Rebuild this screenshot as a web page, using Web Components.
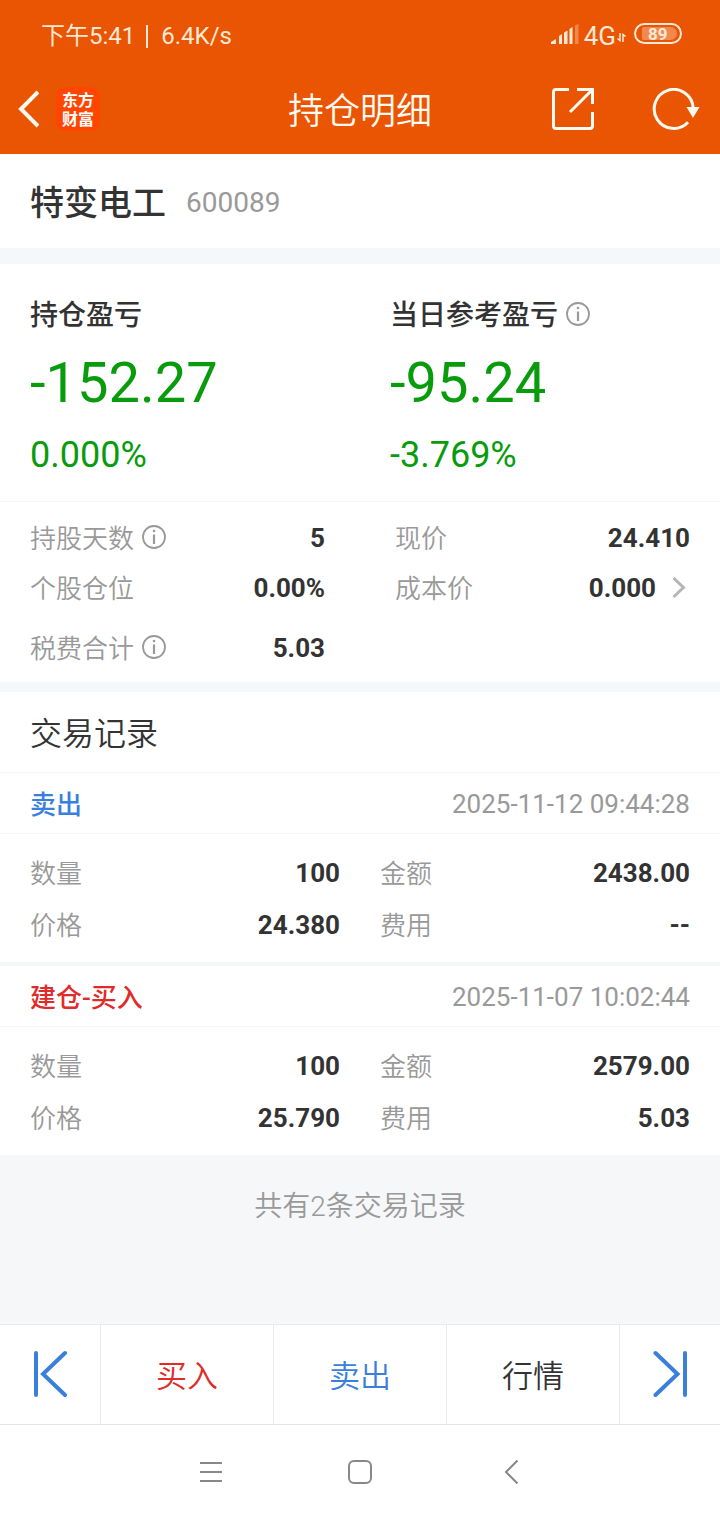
<!DOCTYPE html>
<html lang="zh-CN">
<head>
<meta charset="utf-8">
<meta name="viewport" content="width=device-width, initial-scale=1">
<title>持仓明细</title>
<style>
  html, body { margin: 0; padding: 0; }
  body {
    font-family: Roboto, "Noto Sans CJK SC", sans-serif;
    color: #333;
    background: #fff;
    --brand: #e95502;
    --band: #f6f7f9;
    --line: #f5f5f5;
    --muted: #999;
    --blue: #3a7fdb;
    --red: #e02b2b;
    --green: #089c0c;
  }
</style>
</head>
<body>
<position-page></position-page>

<script>
const define = (name, html, setup) => {
  const tpl = document.createElement('template');
  tpl.innerHTML = html;
  customElements.define(name, class extends HTMLElement {
    constructor() {
      super();
      this.attachShadow({ mode: 'open' }).append(tpl.content.cloneNode(true));
    }
    connectedCallback() { if (setup) setup(this, this.shadowRoot); }
  });
};

define('status-bar', `
  <style>
    :host { display: flex; align-items: center; justify-content: space-between; height: 56px;
      padding: 8px 38px 0 41px; color: #ffe9d6; font-size: 24px; line-height: 32px; }
    .left, .right { display: flex; align-items: center; }
    .bar { width: 2px; height: 23px; margin: 0 13px 0 11px; background: #ffe9d6; }
    .net { margin: 0 1px 0 5px; font-size: 26px; }
    .signal { margin-top: -4px; }
    .data { margin-top: 3px; }
    .battery { box-sizing: border-box; display: flex; align-items: center; justify-content: center;
      width: 48px; height: 21px; margin: -5px 0 0 8px; border: 2px solid #ffe9d6; border-radius: 11px;
      font-size: 17px; line-height: 17px; font-weight: 700; }
    .battery span { flex: 1; margin: 0 3px 0 6px; border-radius: 2px 7px 7px 2px; height: 13px;
      line-height: 14px; background: #f18850; text-indent: 6px; }
    svg { display: block; }
  </style>
  <div class="left"><span>下午5:41</span><i class="bar"></i><span>6.4K/s</span></div>
  <div class="right">
    <svg class="signal" width="28" height="20" viewBox="0 0 28 20" fill="#ffe9d6">
      <path d="M0 20v-2l5-3v5z"/><path d="M8 12l3-2v10H8z"/><path d="M13 8.500l3.500-2V20H13z"/><path d="M18.500 5l3-2v17h-3z"/>
      <path d="M24 1.500l3.500-1.500V20H24z" opacity=".35"/>
    </svg>
    <span class="net">4G</span>
    <svg class="data" width="9" height="9" viewBox="0 0 9 9" fill="none" stroke="#ffe9d6" stroke-width="1.500"><path d="M3 0v7.500L.5 5.500M6 9V1.500l2.500 2"/></svg>
    <div class="battery"><span>89</span></div>
  </div>`);

define('nav-bar', `
  <style>
    :host { display: grid; grid-template-columns: 1fr auto 1fr; align-items: center; height: 90px;
      padding: 0 19px 0 17px; color: #fffaf2; }
    h1 { margin: 0; padding: 6px 0 0 2px; font-size: 36px; line-height: 48px; font-weight: 350; }
    .left, .right { display: flex; align-items: center; }
    .left { gap: 17px; }
    .right { gap: 58px; justify-content: flex-end; }
    button { display: block; padding: 0; border: 0; background: none; color: inherit; }
    svg { display: block; }
    .logo { display: grid; place-content: center; width: 44px; height: 44px; border-radius: 9px; background: #ff4600;
      font: 700 16px/19px "Noto Sans CJK SC", sans-serif; text-align: center; text-decoration: none; color: #fff; }
    .logo span { display: block; width: 32px; }
  </style>
  <div class="left">
    <button aria-label="返回"><svg width="22" height="38" viewBox="0 0 22 38" fill="none" stroke="currentColor" stroke-width="4"><path d="M21 2L4 19l17 17"/></svg></button>
    <a class="logo" href="#"><span>东方财富</span></a>
  </div>
  <h1>持仓明细</h1>
  <div class="right">
    <button aria-label="分享"><svg width="42" height="42" viewBox="0 0 42 42" fill="none" stroke="currentColor" stroke-width="3">
      <path d="M17 1.500H4Q1.500 1.500 1.500 4v34Q1.500 40.500 4 40.500h34Q40.500 40.500 40.500 38V24"/><path d="M25 1.500h15.500V16M39.500 2.500L18 24"/></svg></button>
    <button aria-label="刷新"><svg width="49" height="42" viewBox="0 0 49 42" fill="none" stroke="currentColor" stroke-width="3">
      <path d="M41.200 20A19.500 19.500 0 1 0 36 34.200"/><path d="M34.500 19h13L41 30z" fill="currentColor" stroke="none"/></svg></button>
  </div>`);

define('info-icon', `
  <style>:host { display: inline-block; width: 24px; height: 24px; margin-top: -4px; color: var(--muted); } svg { display: block; }</style>
  <svg width="24" height="24" viewBox="0 0 24 24" fill="none" stroke="currentColor" stroke-width="1.800">
    <circle cx="12" cy="12" r="11"/><path d="M12 9.500V19" stroke-width="2.200"/><circle cx="12" cy="6" r="1.300" fill="currentColor" stroke="none"/></svg>`);

define('stock-title', `
  <style>
    :host { display: flex; align-items: center; gap: 20px; height: 90px; padding: 4px 30px 0; background: #fff; }
    h2 { margin: 0; font-size: 34px; line-height: 48px; font-weight: 500; }
    span { font-size: 28px; line-height: 48px; color: var(--muted); }
  </style>
  <h2><slot></slot></h2><span><slot name="code"></slot></span>`);

define('profit-cell', `
  <style>
    :host { display: block; }
    .label { display: flex; align-items: center; gap: 8px; padding-top: 2px; font-size: 28px; line-height: 40px; font-weight: 500; }
    .amount { font-size: 56px; line-height: 66px; margin-top: 14px; color: var(--green); }
    .rate { font-size: 36px; line-height: 44px; margin-top: 17px; color: var(--green); }
  </style>
  <div class="label"><slot></slot></div>
  <div class="amount"><slot name="amount"></slot></div>
  <div class="rate"><slot name="rate"></slot></div>`);

define('data-row', `
  <style>
    :host { display: flex; align-items: center; justify-content: space-between; font-size: 26px; line-height: 36px; }
    .label { display: flex; align-items: center; gap: 8px; padding-top: 2px; color: var(--muted); font-weight: 350; }
    .value { display: flex; align-items: center; font-weight: 700; }
  </style>
  <div class="label"><slot></slot></div><div class="value"><slot name="value"></slot></div>`);

define('trade-record', `
  <style>
    :host { display: block; background: #fff; }
    header { display: flex; align-items: center; justify-content: space-between; height: 58px; padding: 2px 30px 0;
      border-bottom: 1px solid var(--line); font-size: 26px; line-height: 36px; }
    h3 { margin: 0; padding-top: 2px; font-size: 26px; font-weight: 500; color: var(--blue); }
    :host([kind="buy"]) h3 { color: var(--red); }
    time { color: var(--muted); }
    .grid { display: grid; grid-template-columns: 1fr 1fr; grid-auto-rows: 52px; column-gap: 40px; padding: 13px 30px 11px; }
  </style>
  <header><h3></h3><time></time></header>
  <div class="grid">
    <data-row>数量<span slot="value" data-k="qty"></span></data-row>
    <data-row>金额<span slot="value" data-k="total"></span></data-row>
    <data-row>价格<span slot="value" data-k="price"></span></data-row>
    <data-row>费用<span slot="value" data-k="fee"></span></data-row>
  </div>`, (el, root) => {
    root.querySelector('h3').textContent = el.getAttribute('label');
    root.querySelector('time').textContent = el.getAttribute('time');
    root.querySelectorAll('[data-k]').forEach(n => n.textContent = el.getAttribute(n.dataset.k));
  });

define('action-bar', `
  <style>
    :host { display: grid; grid-template-columns: 100px 1fr 1fr 1fr 101px; height: 99px;
      border-top: 1px solid #eaebed; border-bottom: 1px solid #e4e4e4; background: #fff; }
    button { display: grid; place-content: center; padding: 4px 0 0; border: 0; border-left: 1px solid #eaeaea; background: none;
      font-family: inherit; font-size: 31px; line-height: 44px; font-weight: 350; color: #333; }
    button:first-of-type { border-left: 0; }
    .step { padding: 0 0 2px; }
    .blue { color: var(--blue); }
    .red { color: var(--red); }
    svg { display: block; }
  </style>
  <button class="blue step" aria-label="上一个"><svg width="34" height="48" viewBox="0 0 34 48" fill="none" stroke="currentColor" stroke-width="4" stroke-linecap="round"><path d="M3 3v42M32 3L10 24l22 21"/></svg></button>
  <button class="red">买入</button>
  <button class="blue">卖出</button>
  <button>行情</button>
  <button class="blue step" aria-label="下一个"><svg width="34" height="48" viewBox="0 0 34 48" fill="none" stroke="currentColor" stroke-width="4" stroke-linecap="round"><path d="M32 3v42M2.500 3l22 21-22 21"/></svg></button>`);

define('system-nav', `
  <style>
    :host { display: flex; align-items: center; justify-content: center; gap: 125px; height: 93px; padding-bottom: 2px; background: #fff; color: #888; }
    button { display: block; padding: 0; border: 0; background: none; color: inherit; }
    svg { display: block; }
  </style>
  <button aria-label="菜单"><svg width="24" height="24" viewBox="0 0 24 24" fill="none" stroke="currentColor" stroke-width="2"><path d="M1 3h22M1 12h22M1 21h22"/></svg></button>
  <button aria-label="主页"><svg width="24" height="24" viewBox="0 0 24 24" fill="none" stroke="currentColor" stroke-width="2"><rect x="1" y="1" width="22" height="22" rx="5"/></svg></button>
  <button aria-label="返回"><svg width="24" height="24" viewBox="0 0 24 24" fill="none" stroke="currentColor" stroke-width="2"><path d="M20.500 .5L9 12l11.500 11.500"/></svg></button>`);

define('position-page', `
  <style>
    :host { display: flex; flex-direction: column; min-height: 100vh; background: var(--band); }
    .top { background: var(--brand); }
    .profit { display: grid; grid-template-columns: 1fr 1fr; margin-top: 16px; padding: 30px 0 24px;
      background: #fff; border-bottom: 1px solid var(--line); }
    .profit profit-cell { padding-left: 30px; }
    .stats { display: grid; grid-template-columns: 1fr 1fr; grid-template-rows: 50px 50px 69px; column-gap: 70px;
      padding: 11px 30px 0; background: #fff; }
    .more { display: block; margin: 0 4px 0 16px; }
    .heading { margin: 10px 0 0; padding: 4px 30px 0; font-size: 32px; line-height: 76px; font-weight: 350;
      background: #fff; border-bottom: 1px solid var(--line); }
    .records { display: grid; gap: 4px; }
    .total { flex: 1; margin: 0; padding-top: 32px; font-size: 28px; line-height: 40px; font-weight: 350;
      text-align: center; color: var(--muted); }
  </style>
  <div class="top"><status-bar></status-bar><nav-bar></nav-bar></div>
  <stock-title>特变电工<span slot="code">600089</span></stock-title>
  <section class="profit">
    <profit-cell>持仓盈亏<span slot="amount">-152.27</span><span slot="rate">0.000%</span></profit-cell>
    <profit-cell>当日参考盈亏<info-icon></info-icon><span slot="amount">-95.24</span><span slot="rate">-3.769%</span></profit-cell>
  </section>
  <section class="stats">
    <data-row>持股天数<info-icon></info-icon><span slot="value">5</span></data-row>
    <data-row>现价<span slot="value">24.410</span></data-row>
    <data-row>个股仓位<span slot="value">0.00%</span></data-row>
    <data-row>成本价<span slot="value">0.000</span><svg slot="value" class="more" width="14" height="22" viewBox="0 0 14 22" fill="none" stroke="#b5b5b5" stroke-width="3"><path d="M1.500 1L11.500 10.500l-10 9.500"/></svg></data-row>
    <data-row>税费合计<info-icon></info-icon><span slot="value">5.03</span></data-row>
  </section>
  <h2 class="heading">交易记录</h2>
  <div class="records">
    <trade-record label="卖出" time="2025-11-12 09:44:28" qty="100" total="2438.00" price="24.380" fee="--"></trade-record>
    <trade-record kind="buy" label="建仓-买入" time="2025-11-07 10:02:44" qty="100" total="2579.00" price="25.790" fee="5.03"></trade-record>
  </div>
  <p class="total">共有2条交易记录</p>
  <action-bar></action-bar>
  <system-nav></system-nav>`);
</script>
</body>
</html>
